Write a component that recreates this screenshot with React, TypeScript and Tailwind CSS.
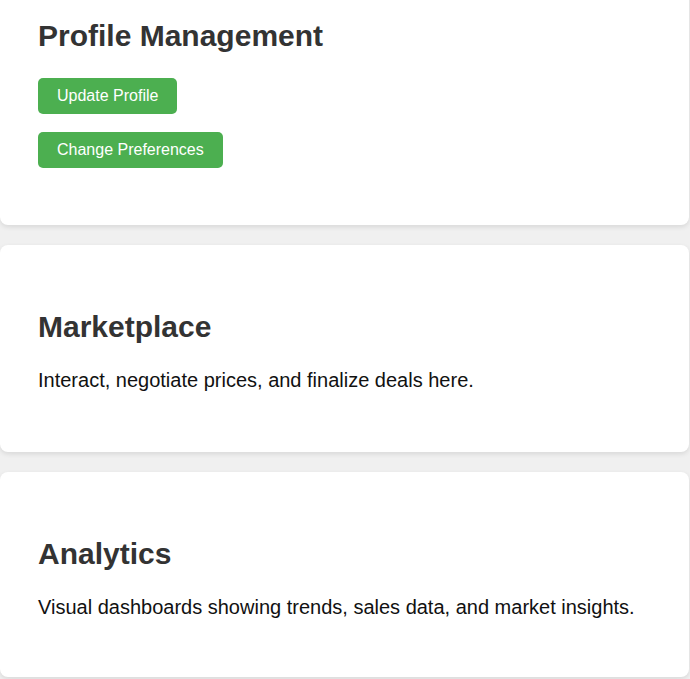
import React from "react";

export default function App() {
  return (
    <div className="min-h-screen bg-[#f0f0f0] overflow-hidden font-['Liberation_Sans',Arial,sans-serif]">
      <div className="-mt-[46px] flex w-[689px] flex-col gap-5">
        <section className="rounded-lg bg-white px-[38px] pt-10 pb-[57px] shadow-[0_2px_5px_rgba(0,0,0,0.1)]">
          <h2 className="mt-[25px] mb-[25px] text-[30px] font-bold leading-[34px] text-[#333]">
            Profile Management
          </h2>
          <div className="flex flex-col items-start gap-[18px]">
            <button className="h-9 rounded-[5px] bg-[#4CAF50] px-[19px] text-[16px] leading-[18px] text-white">
              Update Profile
            </button>
            <button className="h-9 rounded-[5px] bg-[#4CAF50] px-[19px] text-[16px] leading-[18px] text-white">
              Change Preferences
            </button>
          </div>
        </section>
        <section className="rounded-lg bg-white px-[38px] pt-10 pb-10 shadow-[0_2px_5px_rgba(0,0,0,0.1)]">
          <h2 className="mt-[25px] mb-[25px] text-[30px] font-bold leading-[34px] text-[#333]">
            Marketplace
          </h2>
          <p className="mb-5 text-[20px] leading-[23px] text-[#111]">
            Interact, negotiate prices, and finalize deals here.
          </p>
        </section>
        <section className="rounded-lg bg-white px-[38px] pt-10 pb-[38px] shadow-[0_2px_5px_rgba(0,0,0,0.1)]">
          <h2 className="mt-[25px] mb-[25px] text-[30px] font-bold leading-[34px] text-[#333]">
            Analytics
          </h2>
          <p className="mb-5 text-[20px] leading-[23px] text-[#111]">
            Visual dashboards showing trends, sales data, and market insights.
          </p>
        </section>
      </div>
    </div>
  );
}
